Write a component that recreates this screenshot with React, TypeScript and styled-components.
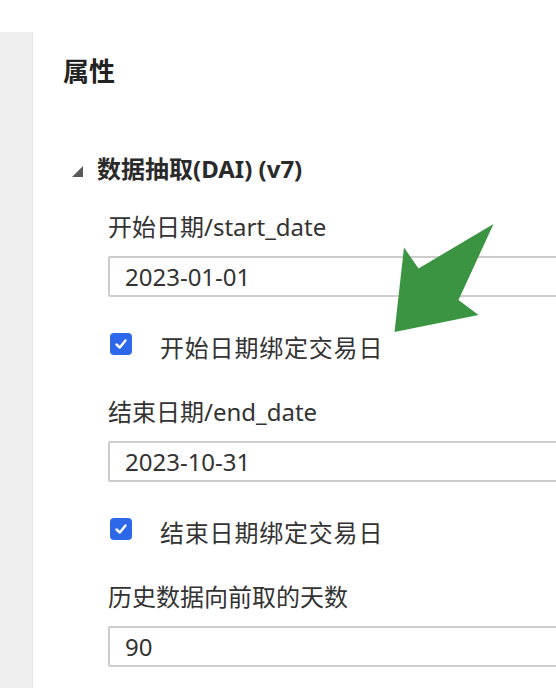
import styled, { createGlobalStyle } from "styled-components";

interface Field {
  label: string;
  value: string;
  bindLabel?: string;
}

const fields: Field[] = [
  { label: "开始日期/start_date", value: "2023-01-01", bindLabel: "开始日期绑定交易日" },
  { label: "结束日期/end_date", value: "2023-10-31", bindLabel: "结束日期绑定交易日" },
  { label: "历史数据向前取的天数", value: "90" },
];

export default function App() {
  return (
    <>
      <GlobalStyle />
      <Page>
        <Sidebar />
        <Panel>
          <Title>属性</Title>
          <SectionHeader>
            <Caret />
            数据抽取(DAI) (v7)
          </SectionHeader>
          <Fields>
            {fields.map((field) => (
              <FieldBlock key={field.label}>
                <Label>{field.label}</Label>
                <TextInput readOnly value={field.value} />
                {field.bindLabel && (
                  <CheckRow>
                    <CheckBox>
                      <svg width="14" height="14" viewBox="0 0 14 14">
                        <polyline
                          points="2.5,7.5 5.8,10.5 11.5,3.5"
                          fill="none"
                          stroke="#fff"
                          strokeWidth="2.4"
                          strokeLinecap="round"
                          strokeLinejoin="round"
                        />
                      </svg>
                    </CheckBox>
                    <CheckText>{field.bindLabel}</CheckText>
                  </CheckRow>
                )}
              </FieldBlock>
            ))}
          </Fields>
          <Arrow width="110" height="140" viewBox="0 0 110 140">
            <polygon
              points="103.5,24 68.5,100 88.5,115 4.5,132 14,47.5 28.5,68.5"
              fill="#3b9442"
            />
          </Arrow>
        </Panel>
      </Page>
    </>
  );
}

const GlobalStyle = createGlobalStyle`
  body {
    margin: 0;
    background: #fff;
    overflow: hidden;
    font-family: "Noto Sans", "Noto Sans CJK SC", sans-serif;
    color: #333;
  }
`;

const Page = styled.div`
  display: flex;
  height: 688px;
  padding-top: 32px;
  box-sizing: border-box;
`;

const Sidebar = styled.div`
  width: 32px;
  flex-shrink: 0;
  background: #efefef;
  border-right: 1px solid #e6e6e6;
`;

const Panel = styled.div`
  position: relative;
  flex: 1;
  min-width: 0;
  overflow: hidden;
  padding: 21px 0 0 30px;
`;

const Title = styled.h2`
  margin: 0;
  font-size: 26px;
  line-height: 36px;
  font-weight: 600;
  color: #222;
`;

const SectionHeader = styled.div`
  display: flex;
  align-items: center;
  gap: 14px;
  margin: 64px 0 0 9px;
  font-size: 24px;
  line-height: 32px;
  font-weight: 700;
  color: #2a2a2a;
`;

const Caret = styled.span`
  width: 0;
  height: 0;
  border-left: 11px solid transparent;
  border-bottom: 11px solid #5a5a5a;
  margin-top: 4px;
`;

const Fields = styled.div`
  display: flex;
  flex-direction: column;
  gap: 34px;
  margin: 26px 0 0 45px;
`;

const FieldBlock = styled.div`
  display: flex;
  flex-direction: column;
`;

const Label = styled.div`
  font-size: 24px;
  line-height: 32px;
  color: #333;
`;

const TextInput = styled.input`
  width: 500px;
  height: 41px;
  box-sizing: border-box;
  margin-top: 13px;
  padding: 0 15px;
  border: 2px solid #cdcdcd;
  border-radius: 2px;
  font-family: inherit;
  font-size: 24px;
  color: #333;
  background: #fff;
  outline: none;
`;

const CheckRow = styled.div`
  display: flex;
  align-items: center;
  gap: 28px;
  height: 32px;
  margin: 33px 0 0 2px;
`;

const CheckBox = styled.span`
  display: flex;
  align-items: center;
  justify-content: center;
  width: 22px;
  height: 22px;
  border-radius: 4px;
  background: #2e68ea;
  margin-top: -4px;
`;

const CheckText = styled.span`
  font-size: 24px;
  letter-spacing: 0.8px;
  color: #333;
`;

const Arrow = styled.svg`
  position: absolute;
  left: 357px;
  top: 168px;
`;
